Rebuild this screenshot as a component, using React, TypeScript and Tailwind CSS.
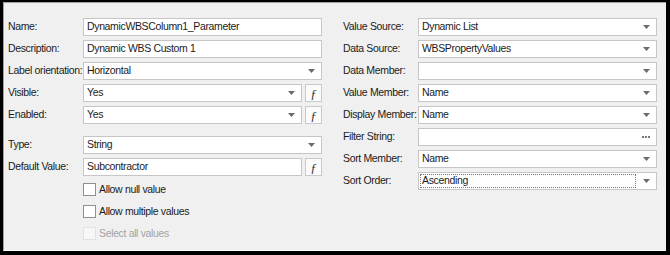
import React from "react";

const font = { fontFamily: "Tahoma, 'Liberation Sans', 'DejaVu Sans', sans-serif" };

function Arrow() {
  return (
    <svg width="7" height="4" viewBox="0 0 7 4" className="shrink-0">
      <path d="M0 0 H7 L3.5 4 Z" fill="#6b6b6b" />
    </svg>
  );
}

function Dots() {
  return (
    <svg width="8" height="2" viewBox="0 0 8 2" className="shrink-0">
      <rect x="0" y="0" width="2" height="2" fill="#7a7a7a" />
      <rect x="3" y="0" width="2" height="2" fill="#7a7a7a" />
      <rect x="6" y="0" width="2" height="2" fill="#7a7a7a" />
    </svg>
  );
}

function Fx() {
  return (
    <div className="w-[17px] h-[18px] shrink-0 bg-[#fbfbfb] border border-[#c9c9c9] flex items-center justify-center text-[13px] text-[#333] italic font-['Liberation_Serif',serif] leading-none tracking-normal">
      ƒ
    </div>
  );
}

function Field({
  value = "",
  combo = false,
  fx = false,
  dots = false,
  focus = false,
}: {
  value?: string;
  combo?: boolean;
  fx?: boolean;
  dots?: boolean;
  focus?: boolean;
}) {
  return (
    <div className="flex-1 flex gap-[3px] min-w-0">
      <div className="flex-1 h-[18px] bg-white border border-[#c6c6c6] flex items-center pl-[1px] pr-[6px]">
        {focus ? (
          <div className="flex-1 h-[14px] border border-dotted border-[#777] flex items-center pl-[1px] mr-[7px]">
            {value}
          </div>
        ) : (
          <div className="flex-1 pl-[2px] truncate">{value}</div>
        )}
        {combo && <Arrow />}
        {dots && <Dots />}
      </div>
      {fx && <Fx />}
    </div>
  );
}

function Row({ label, children }: { label: string; children: React.ReactNode }) {
  return (
    <div className="flex items-center h-[18px]">
      <div className="w-[75px] shrink-0 whitespace-nowrap">{label}</div>
      {children}
    </div>
  );
}

function Check({ label, disabled = false }: { label: string; disabled?: boolean }) {
  return (
    <div className="flex items-center h-[13px] pl-[75px]">
      <div
        className={
          disabled
            ? "w-[13px] h-[13px] border border-[#e2e2e2] bg-[#f7f7f7]"
            : "w-[13px] h-[13px] border border-[#8f8f8f] bg-white"
        }
      />
      <span className={disabled ? "ml-[3px] text-[#a3a3a3]" : "ml-[3px]"}>{label}</span>
    </div>
  );
}

export default function App() {
  return (
    <div
      style={font}
      className="w-[670px] h-[255px] bg-black pl-[3px] pt-[2px] pr-[4px] pb-[4px] text-[10.5px] tracking-[-0.35px] text-[#1b1b1b]"
    >
      <div className="w-full h-full bg-[#f0f0f0] border-t border-l border-[#a0a0a0] border-b border-b-white flex pl-[4px] pt-[15px] gap-[21px]">
        {/* Left column */}
        <div className="w-[314px] flex flex-col">
          <div className="flex flex-col gap-[4px]">
            <Row label="Name:">
              <Field value="DynamicWBSColumn1_Parameter" />
            </Row>
            <Row label="Description:">
              <Field value="Dynamic WBS Custom 1" />
            </Row>
            <Row label="Label orientation:">
              <Field value="Horizontal" combo />
            </Row>
            <Row label="Visible:">
              <Field value="Yes" combo fx />
            </Row>
            <Row label="Enabled:">
              <Field value="Yes" combo fx />
            </Row>
          </div>
          <div className="flex flex-col gap-[4px] mt-[12px]">
            <Row label="Type:">
              <Field value="String" combo />
            </Row>
            <Row label="Default Value:">
              <Field value="Subcontractor" fx />
            </Row>
          </div>
          <div className="flex flex-col gap-[9px] mt-[7px]">
            <Check label="Allow null value" />
            <Check label="Allow multiple values" />
            <Check label="Select all values" disabled />
          </div>
        </div>

        {/* Right column */}
        <div className="w-[314px] flex flex-col gap-[4px]">
          <Row label="Value Source:">
            <Field value="Dynamic List" combo />
          </Row>
          <Row label="Data Source:">
            <Field value="WBSPropertyValues" combo />
          </Row>
          <Row label="Data Member:">
            <Field combo />
          </Row>
          <Row label="Value Member:">
            <Field value="Name" combo />
          </Row>
          <Row label="Display Member:">
            <Field value="Name" combo />
          </Row>
          <Row label="Filter String:">
            <Field dots />
          </Row>
          <Row label="Sort Member:">
            <Field value="Name" combo />
          </Row>
          <Row label="Sort Order:">
            <Field value="Ascending" combo focus />
          </Row>
        </div>
      </div>
    </div>
  );
}
